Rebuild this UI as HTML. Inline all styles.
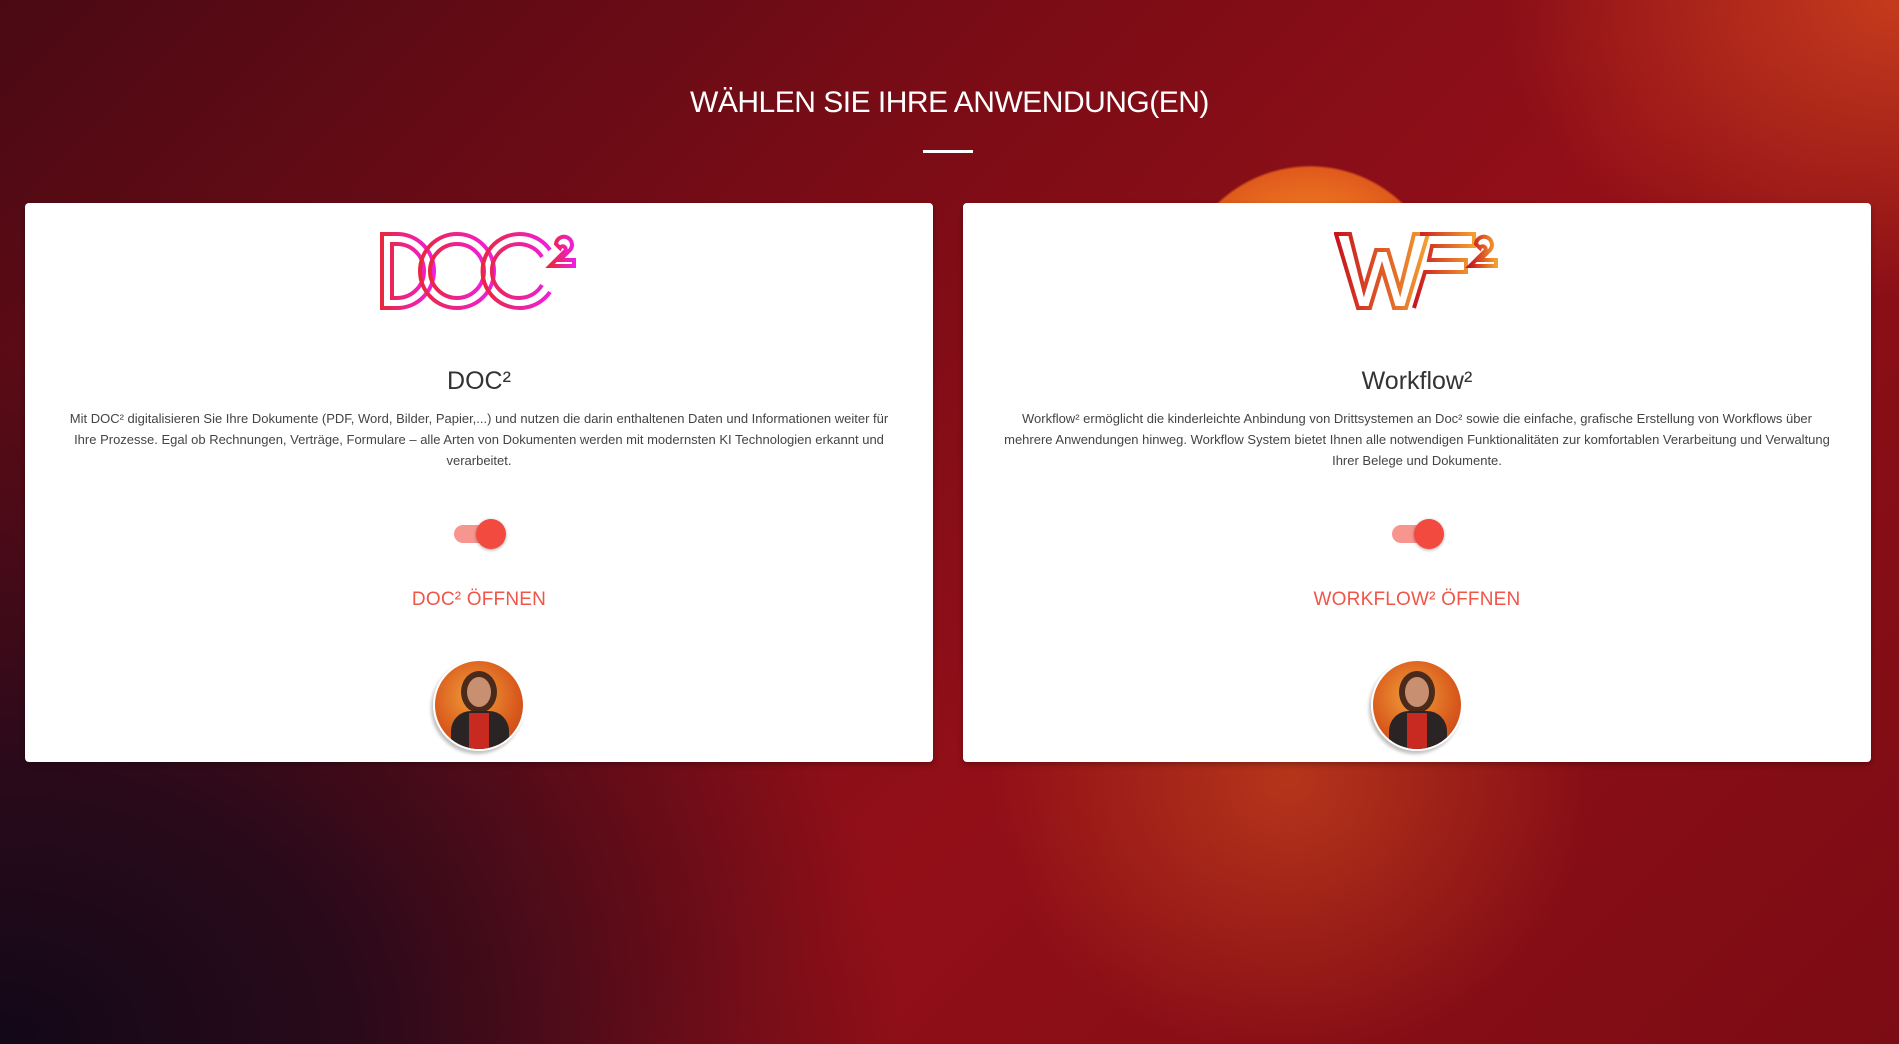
<!DOCTYPE html>
<html><head><meta charset="utf-8"><style>
*{margin:0;padding:0;box-sizing:border-box}
body{width:1899px;height:1044px;overflow:hidden;font-family:"Liberation Sans",sans-serif;position:relative;
background:
radial-gradient(circle 135px at 1310px 300px,#f6a12e 0%,#ee7a22 60%,#e05a1c 98%,rgba(200,40,20,0) 100%),
radial-gradient(ellipse 300px 280px at 1290px 780px,rgba(230,100,30,.45) 0%,rgba(150,20,20,0) 100%),
radial-gradient(ellipse 400px 300px at 1899px 0px,rgba(210,70,30,.8) 0%,rgba(160,20,20,0) 100%),
radial-gradient(ellipse 900px 700px at 0px 1044px,#120818 0%,#2a0a1a 40%,rgba(80,10,20,0) 100%),
linear-gradient(135deg,#4a0a14 0%,#7a0c16 35%,#920f18 60%,#7c0c14 100%);}
.title{position:absolute;top:86px;width:100%;text-align:center;color:#fff;font-size:30px;letter-spacing:-.5px}
.bar{position:absolute;left:923px;top:150px;width:50px;height:3px;background:#fff}
.card{position:absolute;top:203px;width:908px;height:559px;background:#fff;border-radius:4px;box-shadow:0 2px 6px rgba(0,0,0,.3);text-align:center}
.card h2{position:absolute;top:164px;width:100%;font-weight:normal;font-size:25px;color:#333}
.card p{position:absolute;top:205px;left:38px;right:38px;font-size:13px;line-height:21px;color:#444}
.tg{position:absolute;top:315px;left:50%;margin-left:-25px;width:52px;height:30px}
.tg .tr{position:absolute;left:0;top:7px;width:42px;height:18px;border-radius:9px;background:#f7968f}
.tg .kn{position:absolute;left:22px;top:1px;width:30px;height:30px;border-radius:50%;background:#f24a3e;box-shadow:0 1px 3px rgba(0,0,0,.35)}
.btn{position:absolute;top:386px;width:100%;font-size:19px;color:#f05548;letter-spacing:.2px}
.av{position:absolute;top:456px;left:50%;margin-left:-46px;width:92px;height:92px;border-radius:50%;background:radial-gradient(circle at 45% 40%,#f2a03a,#d95a1c 60%,#b8401a);border:2px solid #fff;box-shadow:-2px 3px 3px rgba(0,0,0,.25);overflow:hidden}
.av .hd{position:absolute;left:32px;top:16px;width:24px;height:30px;border-radius:50%;background:#c89070;box-shadow:0 0 0 6px #4a2a1a}
.av .bd{position:absolute;left:16px;top:50px;width:58px;height:50px;border-radius:20px 20px 0 0;background:#2a2424}
.av .sh{position:absolute;left:34px;top:52px;width:20px;height:40px;background:#c82a22}
</style></head><body>
<div class="title">WÄHLEN SIE IHRE ANWENDUNG(EN)</div>
<div class="bar"></div>
<div class="card" style="left:25px">
<svg style="position:absolute;left:355px;top:27px" width="200" height="82" viewBox="0 0 200 82">
<defs><linearGradient id="g1" x1="0" x2="1"><stop offset="0" stop-color="#e8283c"/><stop offset="1" stop-color="#f01ee0"/></linearGradient></defs>
<g fill="none" stroke="url(#g1)" stroke-width="4">
<path d="M2 4h15a37 37 0 0 1 0 74H2zM12 14v54h5a27 27 0 0 0 0-54z"/>
<circle cx="77" cy="41" r="37"/><circle cx="77" cy="41" r="27"/>
<path d="M170 20a37 37 0 1 0 0 42M162 27a27 27 0 1 0 0 28"/>
<path d="M176 14a8 8 0 1 1 14 6l-10 10h14v6h-24l14-14a3 3 0 1 0-4-4z"/>
</g></svg>
<h2>DOC²</h2>
<p>Mit DOC² digitalisieren Sie Ihre Dokumente (PDF, Word, Bilder, Papier,...) und nutzen die darin enthaltenen Daten und Informationen weiter für Ihre Prozesse. Egal ob Rechnungen, Verträge, Formulare – alle Arten von Dokumenten werden mit modernsten KI Technologien erkannt und verarbeitet.</p>
<div class="tg"><div class="tr"></div><div class="kn"></div></div>
<div class="btn">DOC² ÖFFNEN</div>
<div class="av"><div class="hd"></div><div class="bd"></div><div class="sh"></div></div>
</div>
<div class="card" style="left:963px">
<svg style="position:absolute;left:371px;top:27px" width="170" height="82" viewBox="0 0 170 82">
<defs><linearGradient id="g2" x1="0" x2="1"><stop offset="0" stop-color="#c8141e"/><stop offset="1" stop-color="#f4a030"/></linearGradient></defs>
<g fill="none" stroke="url(#g2)" stroke-width="4">
<path d="M2 4H16L30 60L42 20H54L66 60L80 4H94L72 78H60L48 38L36 78H24Z"/>
<path d="M86 4H140V16H98L95 30H132V42H91L80 78"/>
<path d="M142 14a8 8 0 1 1 14 6l-10 10h16v6h-26l14-14a3 3 0 1 0-4-4z"/>
</g></svg>
<h2>Workflow²</h2>
<p>Workflow² ermöglicht die kinderleichte Anbindung von Drittsystemen an Doc² sowie die einfache, grafische Erstellung von Workflows über mehrere Anwendungen hinweg. Workflow System bietet Ihnen alle notwendigen Funktionalitäten zur komfortablen Verarbeitung und Verwaltung Ihrer Belege und Dokumente.</p>
<div class="tg"><div class="tr"></div><div class="kn"></div></div>
<div class="btn">WORKFLOW² ÖFFNEN</div>
<div class="av"><div class="hd"></div><div class="bd"></div><div class="sh"></div></div>
</div>
</body></html>
